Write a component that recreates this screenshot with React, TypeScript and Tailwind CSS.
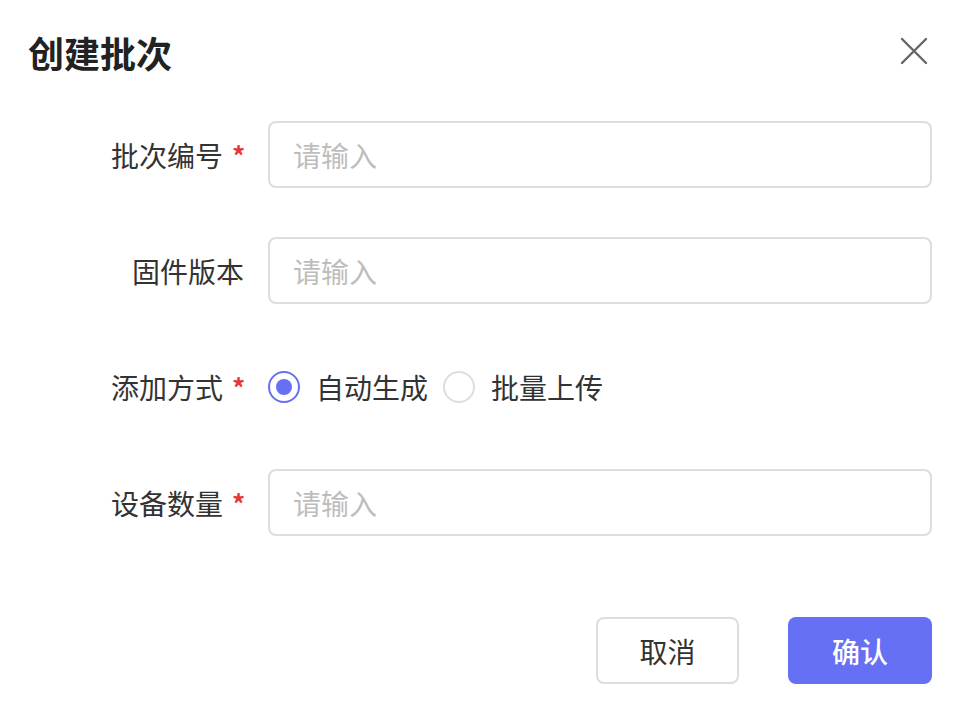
const FONT = "font-['Noto_Sans_CJK_SC','Noto_Sans',sans-serif]";

const Field = ({ label, required }: { label: string; required?: boolean }) => {
  return (
    <div className="flex items-center h-[67px]">
      <Label text={label} required={required} />
      <div className="flex-1 h-full border-2 border-[#dcdde3] rounded-lg flex items-center px-[23px]">
        <input
          placeholder="请输入"
          className="w-full outline-none bg-transparent text-[28px] text-[#333] placeholder:text-[#bdbdbd]"
        />
      </div>
    </div>
  );
};

const Label = ({ text, required }: { text: string; required?: boolean }) => {
  return (
    <div className="w-[244px] mr-[24px] flex justify-end items-center text-[28px] text-[#333]">
      <span>{text}</span>
      {required && (
        <span className="text-[#e5383b] ml-[9px] w-[12px] text-[26px] font-bold leading-none">*</span>
      )}
    </div>
  );
};

const Radio = ({ label, checked }: { label: string; checked?: boolean }) => {
  return (
    <label className="flex items-center gap-[16px] cursor-pointer">
      <span
        className={
          checked
            ? "w-[32px] h-[32px] rounded-full border-2 border-[#6670f5] flex items-center justify-center"
            : "w-[32px] h-[32px] rounded-full border-2 border-[#dcdde3] flex items-center justify-center"
        }
      >
        {checked && <span className="w-[16px] h-[16px] rounded-full bg-[#6670f5]" />}
      </span>
      <span className="text-[28px] text-[#333]">{label}</span>
    </label>
  );
};

export default function App() {
  return (
    <div className={`w-[962px] h-[702px] bg-white ${FONT}`}>
      <div className="h-[104px] flex items-center justify-between pl-[28px] pr-[34px]">
        <h1 className="text-[36px] font-bold text-[#222]">创建批次</h1>
        <button className="w-[28px] h-[28px] flex items-center justify-center -mt-[2px]">
          <svg width="28" height="28" viewBox="0 0 28 28" fill="none">
            <path d="M2 2L26 26M26 2L2 26" stroke="#666" strokeWidth="2.4" strokeLinecap="round" />
          </svg>
        </button>
      </div>

      <div className="pt-[17px] pr-[30px] flex flex-col gap-[49px]">
        <Field label="批次编号" required />
        <Field label="固件版本" />
        <div className="flex items-center h-[67px]">
          <Label text="添加方式" required />
          <div className="flex items-center gap-[15px]">
            <Radio label="自动生成" checked />
            <Radio label="批量上传" />
          </div>
        </div>
        <Field label="设备数量" required />
      </div>

      <div className="mt-[81px] pr-[30px] flex justify-end gap-[49px]">
        <button className="w-[143px] h-[67px] border-2 border-[#dcdde3] rounded-lg text-[28px] text-[#333] bg-white">
          取消
        </button>
        <button className="w-[144px] h-[67px] rounded-lg text-[28px] text-white bg-[#6670f5] font-medium">
          确认
        </button>
      </div>
    </div>
  );
}
